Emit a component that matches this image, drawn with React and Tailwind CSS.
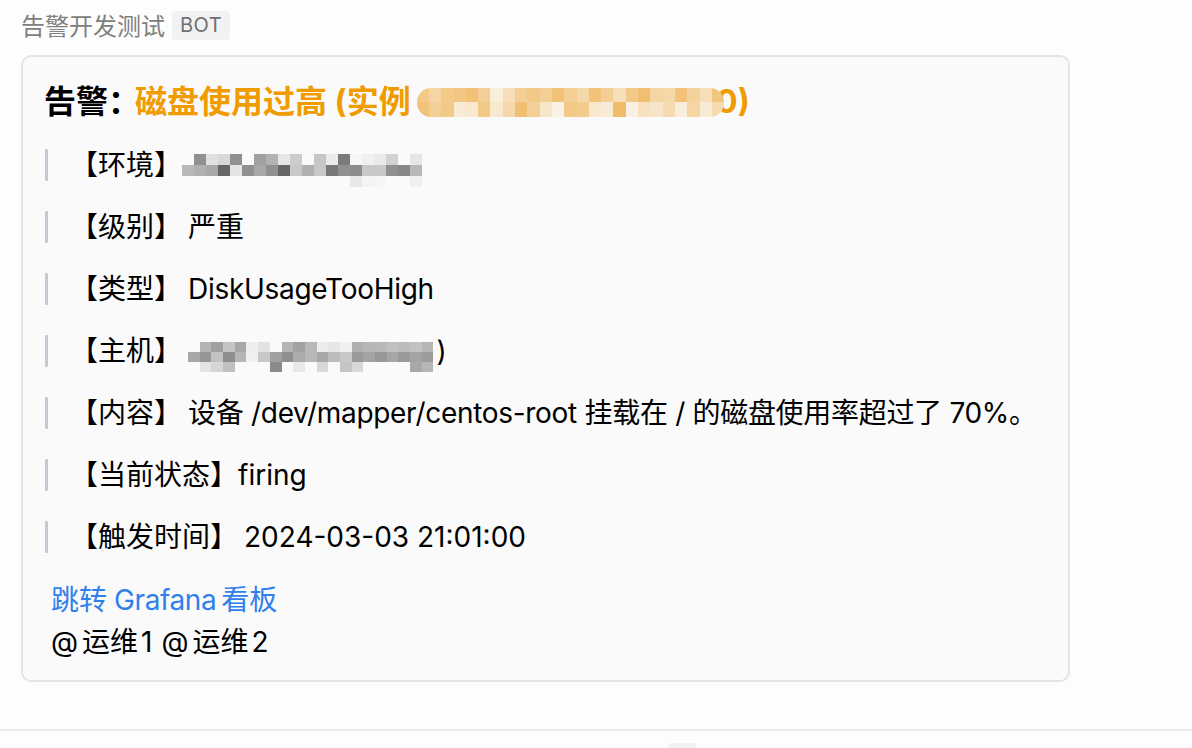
import React from "react";

const T = null;

function Mosaic({ rows, cellW, cellH, tint, className = "" }) {
  return (
    <span className={"inline-flex flex-col align-middle " + className}>
      {rows.map((r, i) => (
        <span key={i} className="flex">
          {r.map((v, j) => (
            <span
              key={j}
              style={{
                width: cellW,
                height: cellH,
                background: v === T ? "transparent" : tint(v),
              }}
            />
          ))}
        </span>
      ))}
    </span>
  );
}

const gray = (v) => `rgb(${v},${v},${v})`;
const orange = (v) => {
  const a = [250, 244, 234];
  const b = [239, 182, 92];
  const m = a.map((x, i) => Math.round(x + (b[i] - x) * v));
  return `rgb(${m[0]},${m[1]},${m[2]})`;
};

const envRows = [
  [T, 0x90, 0xe0, 0xd8, 0x90, T, 0xa0, 0xb2, 0xe6, 0xcc, T, 0xc6, 0xea, 0x7a, 0xf6, 0xf0, 0xea, 0xd2, T, 0xe6],
  [0xb8, 0xb0, 0xa8, 0x66, 0xe4, 0x90, 0xa8, 0x90, 0x66, 0xc8, 0xb0, 0xc8, 0x78, 0x90, 0x8c, 0xc8, 0xc8, 0x90, 0x88, 0xb8],
  [T, T, T, T, T, T, T, T, T, T, T, T, T, T, 0xe8, 0xf4, 0xf6, T, T, 0xf0],
];

const hostRows = [
  [T, 0xb4, 0xa0, 0xc4, 0xa8, 0xee, 0xe2, T, 0xb4, 0xa2, 0xb8, 0xec, 0xe6, 0xf0, 0xb0, 0xb6, 0xb8, 0xc0, 0xbc, 0xc2, 0xb6],
  [0xa8, 0x96, 0xc2, 0x8e, 0xb6, 0xf0, 0xc8, 0xa0, 0x90, 0xac, 0xb8, 0xa8, 0xbc, 0xc8, 0x9a, 0xa4, 0x98, 0xa6, 0x9a, 0xa4, 0x9c],
  [T, 0xe4, 0xd6, 0xc0, T, T, T, 0x8a, T, 0xe8, T, 0xd8, T, 0xc4, 0xd8, T, T, T, T, 0xa8, 0xb6],
];

const titleRows = [
  [0.7, 0.5, 0.7, 0.75, 0.8, 0.6, 0.1, 0.35, 0.6, 0.7, 0.6, 0.8, 0.6, 0.45, 0.8, 0.6, 0.35, 0.7, 0.85, 0.5, 0.45, 0.8, 0.55, 0.35, 0.75],
  [0.8, 0.6, 0.7, 0.15, 0.2, 0.7, 0.2, 0.45, 0.85, 0.6, 0.25, 0.05, 0.7, 0.65, 0.2, 0.15, 0.9, 0.05, 0.3, 0.25, 0.4, 0.1, 0.5, 0.15, 0.4],
];

function Row({ label, children }) {
  return (
    <div className="flex items-center h-[32px]">
      <div className="w-[3px] h-[32px] bg-[#c4c9d5] rounded-[1px] ml-[1px]" />
      <div className="ml-[22px] flex items-center whitespace-nowrap">
        <span>{label}</span>
        {children}
      </div>
    </div>
  );
}

export default function App() {
  return (
    <div className="w-[1192px] h-[748px] bg-[#fdfdfd] overflow-hidden relative font-['Inter','Noto_Sans_CJK_SC',sans-serif] text-black">
      <div className="pl-[21px] pt-[7px]">
        <div className="flex items-center h-[36px]">
          <span className="text-[24px] text-[#808080] leading-[36px] font-['Noto_Sans_CJK_SC',sans-serif]">告警开发测试</span>
          <span className="ml-[7px] h-[29px] px-[8px] rounded-[4px] bg-[#f1f2f3] text-[20px] text-[#707070] leading-[29px] tracking-[0.5px]">BOT</span>
        </div>
        <div className="mt-[12px] w-[1049px] rounded-[10px] border-2 border-[#e4e4e4] bg-[#fafafa] pl-[21px] pt-[24px] pb-[17px]">
          <div className="flex items-center h-[42px] text-[32px] font-bold whitespace-nowrap leading-[42px]">
            <span>告警：</span>
            <span className="text-[#f09c00] -ml-[5px]">磁盘使用过高 (实例</span>
            <Mosaic rows={titleRows} cellW={12.3} cellH={14.5} tint={orange} className="rounded-[14px] overflow-hidden relative z-10 ml-[6px]" />
            <span className="text-[#f09c00] -ml-[8px]">0)</span>
          </div>
          <div className="mt-[26px] flex flex-col gap-[30px] text-[28px] leading-[32px]">
            <Row label="【环境】">
              <Mosaic rows={envRows} cellW={12} cellH={11} tint={gray} className="mt-[10px]" />
            </Row>
            <Row label="【级别】">
              <span className="ml-[6px]">严重</span>
            </Row>
            <Row label="【类型】">
              <span className="ml-[6px] tracking-[-0.3px]">DiskUsageTooHigh</span>
            </Row>
            <Row label="【主机】">
              <Mosaic rows={hostRows} cellW={11.7} cellH={10} tint={gray} className="ml-[6px] mt-[12px]" />
              <span className="ml-[3px]">)</span>
            </Row>
            <Row label="【内容】">
              <span className="ml-[6px] tracking-[-0.3px]">设备 /dev/mapper/centos-root 挂载在 / 的磁盘使用率超过了 70%。</span>
            </Row>
            <Row label="【当前状态】">
              <span>firing</span>
            </Row>
            <Row label="【触发时间】">
              <span className="ml-[6px]">2024-03-03 21:01:00</span>
            </Row>
          </div>
          <div className="mt-[26px] ml-[7px] text-[28px] leading-[42px]">
            <div className="flex text-[#2f80ed]">
              <span>跳转</span>
              <span className="ml-[7px] tracking-[-0.4px]">Grafana</span>
              <span className="ml-[5px]">看板</span>
            </div>
            <div className="flex">
              <span>@</span>
              <span className="ml-[4px]">运维</span>
              <span className="ml-[3px]">1</span>
              <span className="ml-[9px]">@</span>
              <span className="ml-[4px]">运维</span>
              <span className="ml-[3px]">2</span>
            </div>
          </div>
        </div>
      </div>
      <div className="absolute left-0 right-0 top-[729px] h-[2px] bg-[#ececec]" />
      <div className="absolute left-[668px] top-[743px] w-[28px] h-[12px] rounded-[4px] bg-[#f1f1f1]" />
    </div>
  );
}
